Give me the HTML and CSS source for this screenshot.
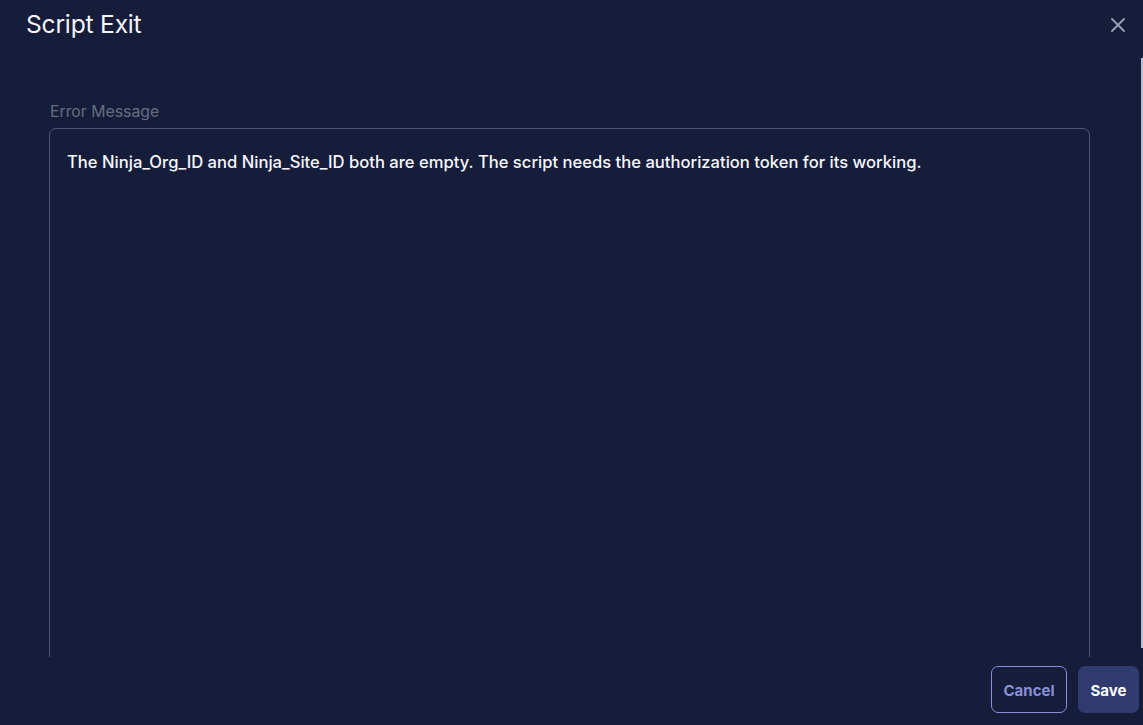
FILE: index.html
```html
<!DOCTYPE html>
<html>
<head>
<meta charset="utf-8">
<link rel="stylesheet" href="styles.css">
</head>
<body>
<div class="modal">
  <header class="modal-header">
    <h1 class="modal-title">Script Exit</h1>
    <button class="close-btn" aria-label="Close">
      <svg width="14" height="14" viewBox="0 0 14 14"><path d="M1 1L13 13M13 1L1 13" stroke="#9ba1b5" stroke-width="1.8" stroke-linecap="round"/></svg>
    </button>
  </header>
  <div class="modal-body">
    <label class="field-label">Error Message</label>
    <div class="textarea">The Ninja_Org_ID and Ninja_Site_ID both are empty. The script needs the authorization token for its working.</div>
  </div>
  <footer class="modal-footer">
    <button class="btn btn-cancel">Cancel</button>
    <button class="btn btn-save">Save</button>
  </footer>
  <div class="scroll-thumb"></div>
</div>
</body>
</html>
```

FILE: styles.css
```css
* { box-sizing: border-box; }
html, body {
  margin: 0;
  padding: 0;
  height: 100%;
  background: #151d3b;
  overflow: hidden;
}
body {
  font-family: Inter, "Noto Sans", sans-serif;
  color: #ffffff;
}
.modal {
  position: relative;
  height: 725px;
  display: flex;
  flex-direction: column;
  background: #151d3b;
}
.modal-header {
  display: flex;
  align-items: center;
  justify-content: space-between;
  height: 50px;
  padding: 0 18px 0 26px;
  flex-shrink: 0;
}
.modal-title {
  margin: 0;
  font-size: 24.6px;
  font-weight: 400;
  color: #f4f5f9;
  letter-spacing: -0.2px;
  position: relative;
  top: -1px;
}
.close-btn {
  background: none;
  border: none;
  padding: 0;
  width: 14px;
  height: 14px;
  display: flex;
  cursor: pointer;
}
.modal-body {
  flex: 1;
  overflow: hidden;
  padding: 52px 53px 0 49px;
  display: flex;
  flex-direction: column;
}
.field-label {
  font-size: 15.8px;
  color: #676d80;
  margin: 0 0 6px 1px;
  line-height: 20px;
}
.textarea {
  flex-shrink: 0;
  height: 700px;
  border: 1px solid #4a5579;
  border-radius: 7px;
  padding: 22px 17px;
  font-size: 16.6px;
  font-weight: 500;
  line-height: 22px;
  color: #f7f8fb;
}
.modal-footer {
  flex-shrink: 0;
  height: 68px;
  display: flex;
  justify-content: flex-end;
  align-items: flex-start;
  gap: 11px;
  padding: 9px 4px 0 0;
}
.btn {
  height: 47px;
  border-radius: 7px;
  font-family: Inter, "Noto Sans", sans-serif;
  font-size: 15px;
  font-weight: 700;
  cursor: pointer;
  padding-top: 2px;
}
.btn-cancel {
  width: 76px;
  background: transparent;
  border: 1px solid #8890d6;
  color: #8890d6;
}
.btn-save {
  width: 61px;
  background: #2f3a6f;
  border: none;
  color: #ffffff;
}
.scroll-thumb {
  position: absolute;
  right: 0;
  top: 58px;
  width: 2px;
  height: 590px;
  background: #b9bdd0;
}
```
